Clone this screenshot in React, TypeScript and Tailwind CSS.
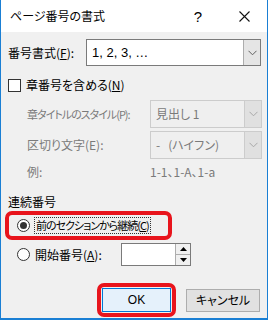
import React from "react";

function Chevron({ dim }: { dim?: boolean }) {
  return (
    <svg width="9" height="6" viewBox="0 0 9 6">
      <path d="M0.5 0.8 L4.5 4.8 L8.5 0.8" fill="none" stroke={dim ? "#a8a8a8" : "#606060"} strokeWidth="1" />
    </svg>
  );
}

function Radio({ checked }: { checked?: boolean }) {
  return (
    <span className="flex h-[13px] w-[13px] shrink-0 items-center justify-center rounded-full border border-[#333] bg-white">
      {checked && <span className="h-[7px] w-[7px] rounded-full bg-[#333]" />}
    </span>
  );
}

export default function App() {
  return (
    <div className="flex h-[320px] w-[268px] flex-col whitespace-nowrap border-x border-b-[2px] border-[#1a7fd4] font-['Noto_Sans_CJK_JP',sans-serif] text-[12px] leading-none text-black [font-feature-settings:'palt']">
      {/* title bar */}
      <div className="flex h-[32px] items-center bg-white">
        <span className="ml-[9px] text-[12px] text-black">ページ番号の書式</span>
        <span className="ml-auto mr-[37px] font-['Liberation_Sans',sans-serif] text-[15px]">?</span>
        <svg className="mr-[17px]" width="11" height="11" viewBox="0 0 11 11">
          <path d="M0.5 0.5 L10.5 10.5 M10.5 0.5 L0.5 10.5" stroke="#111" strokeWidth="1.1" />
        </svg>
      </div>

      <div className="flex flex-1 flex-col bg-[#f0f0f0] pl-[7px] pr-[5px]">
        {/* number format */}
        <div className="mt-[7px] flex h-[27px] items-center">
          <span className="w-[78px]">
            番号書式(<span className="underline">F</span>):
          </span>
          <div className="flex h-full w-[175px] items-stretch border border-[#7a7a7a] bg-white">
            <span className="flex flex-1 items-center pl-[5px] font-['Liberation_Sans','Noto_Sans_CJK_JP',sans-serif] text-[13px]">1, 2, 3, …</span>
            <span className="flex w-[17px] items-center justify-center border-l border-[#adadad] bg-[#e5e5e5]">
              <Chevron />
            </span>
          </div>
        </div>

        {/* include chapter */}
        <div className="mt-[9px] flex h-[20px] items-center">
          <span className="h-[13px] w-[13px] border border-[#333] bg-white" />
          <span className="ml-[5px]">
            章番号を含める(<span className="underline">N</span>)
          </span>
        </div>

        {/* chapter style */}
        <div className="mt-[5px] flex h-[28px] items-center text-[#7a7a7a]">
          <span className="w-[142px] pl-[19px] text-[11px] tracking-[-1px]">章タイトルのスタイル(P):</span>
          <div className="flex h-full w-[112px] items-stretch border border-[#cccccc] bg-[#efefef]">
            <span className="flex flex-1 items-center pl-[5px]">見出し 1</span>
            <span className="flex w-[17px] items-center justify-center border-l border-[#cccccc] bg-[#e0e0e0]">
              <Chevron dim />
            </span>
          </div>
        </div>

        {/* separator */}
        <div className="mt-[3px] flex h-[28px] items-center text-[#7a7a7a]">
          <span className="w-[142px] pl-[19px]">区切り文字(E):</span>
          <div className="flex h-full w-[112px] items-stretch border border-[#cccccc] bg-[#efefef]">
            <span className="flex flex-1 items-center pl-[5px]">-&nbsp;&nbsp;&nbsp;(ハイフン)</span>
            <span className="flex w-[17px] items-center justify-center border-l border-[#cccccc] bg-[#e0e0e0]">
              <Chevron dim />
            </span>
          </div>
        </div>

        {/* example */}
        <div className="mt-[5px] flex h-[16px] items-center text-[#7a7a7a]">
          <span className="w-[142px] pl-[19px]">例:</span>
          <span>1-1、1-A、1-a</span>
        </div>

        {/* numbering group */}
        <div className="mt-[14px] flex h-[16px] items-center">連続番号</div>

        <div className="ml-[-3px] mt-[1px] flex h-[29px] w-[167px] items-center rounded-[7px] border-[4px] border-[#e8141c] pl-[8px]">
          <Radio checked />
          <span className="ml-[4px] border border-dotted border-[#333] px-[1px] py-[2px] text-[11px] tracking-[-1px]">
            前のセクションから継続(<span className="underline">C</span>)
          </span>
        </div>

        <div className="mt-[3px] flex h-[23px] items-center">
          <span className="ml-[9px]">
            <Radio />
          </span>
          <span className="ml-[5px] w-[86px]">
            開始番号(<span className="underline">A</span>):
          </span>
          <div className="flex h-full w-[70px] items-stretch border border-[#7a7a7a] bg-white">
            <span className="flex-1" />
            <span className="flex w-[15px] flex-col border-l border-[#adadad]">
              <span className="flex flex-1 items-center justify-center border-b border-[#adadad] bg-[#f0f0f0]">
                <svg width="7" height="4" viewBox="0 0 7 4">
                  <path d="M0 4 L3.5 0 L7 4 Z" fill="#000" />
                </svg>
              </span>
              <span className="flex flex-1 items-center justify-center bg-[#f0f0f0]">
                <svg width="7" height="4" viewBox="0 0 7 4">
                  <path d="M0 0 L3.5 4 L7 0 Z" fill="#000" />
                </svg>
              </span>
            </span>
          </div>
        </div>

        {/* buttons */}
        <div className="mt-[17px] flex items-center">
          <div className="ml-[89px] flex h-[34px] w-[79px] items-center justify-center rounded-[7px] border-[4px] border-[#e8141c]">
            <button className="flex h-[24px] w-[69px] items-center justify-center border border-[#0078d7] bg-[#e5f1fb] font-['Liberation_Sans',sans-serif] text-[12px]">
              OK
            </button>
          </div>
          <button className="ml-[10px] flex h-[23px] w-[74px] items-center justify-center border border-[#adadad] bg-[#e1e1e1] text-[12px]">
            キャンセル
          </button>
        </div>
      </div>
    </div>
  );
}
